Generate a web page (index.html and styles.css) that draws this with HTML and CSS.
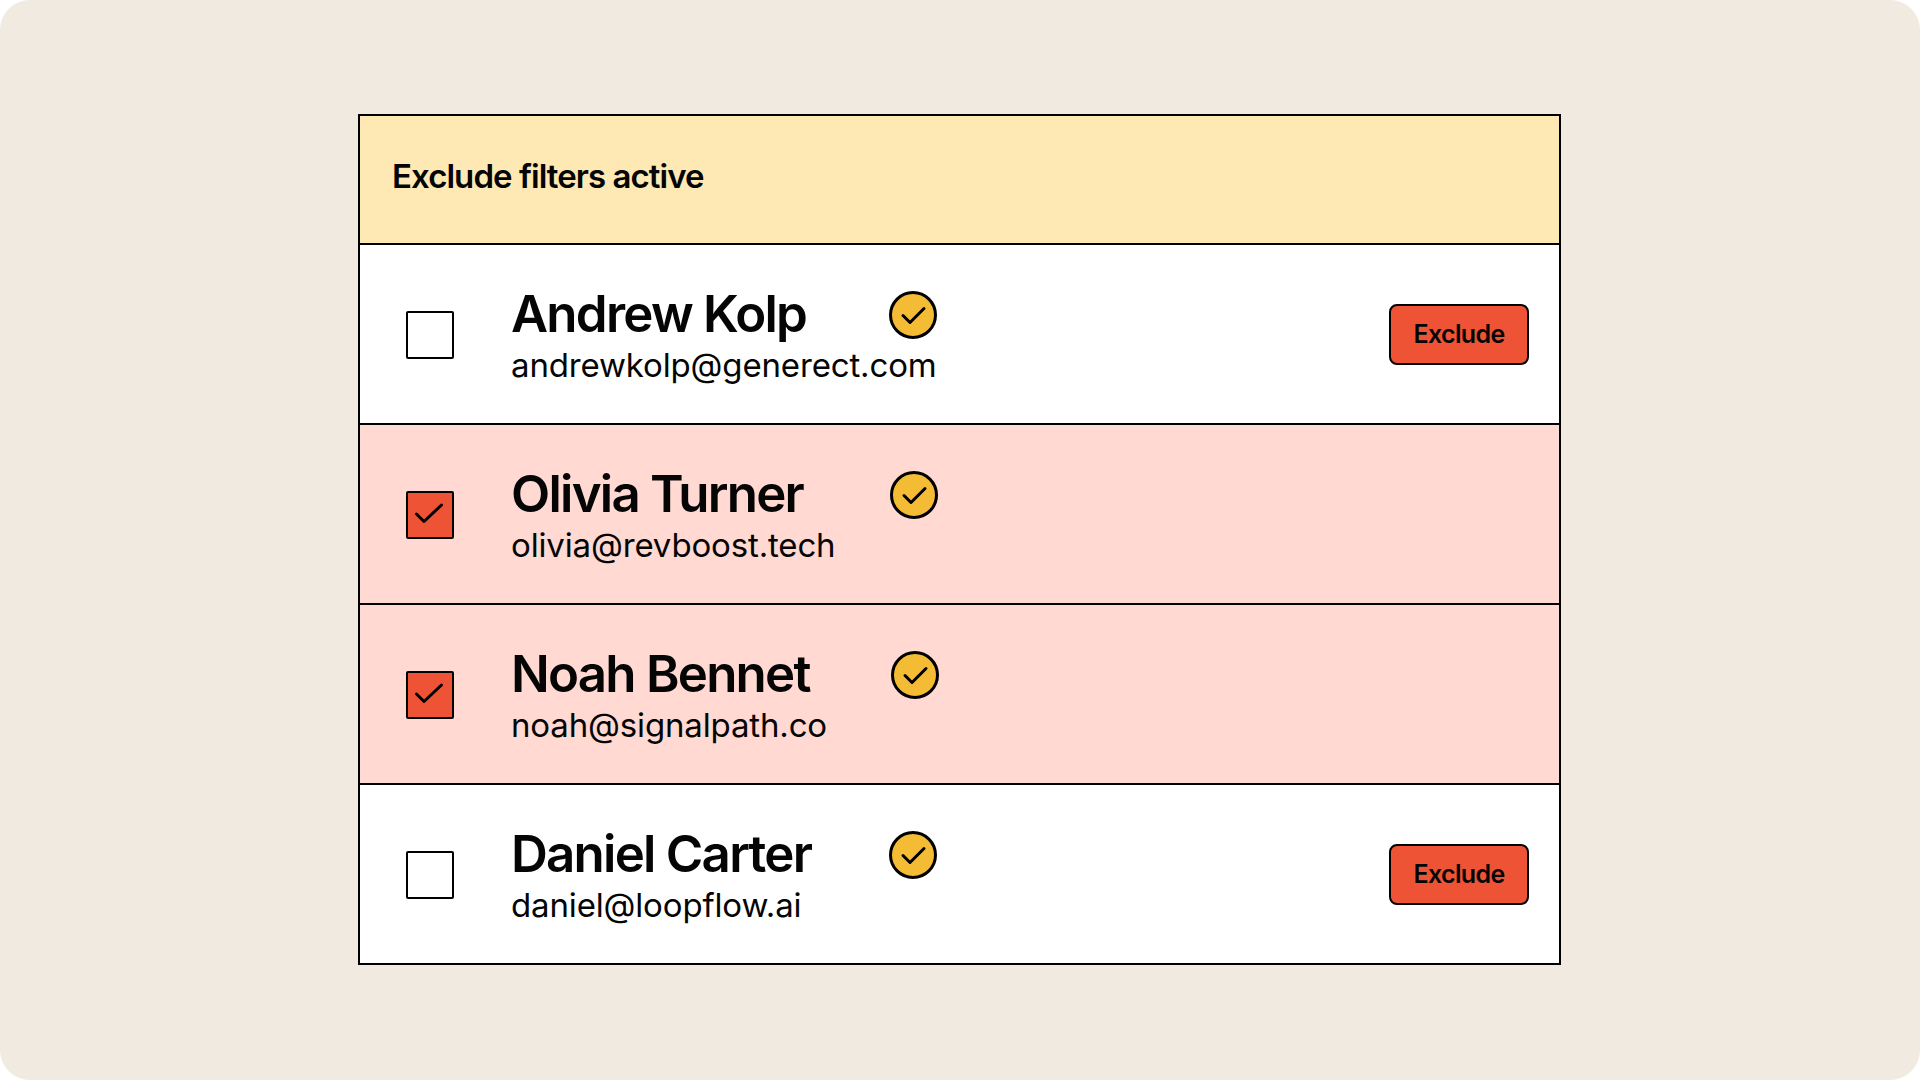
FILE: index.html
```html
<!DOCTYPE html>
<html lang="en">
<head>
  <meta charset="UTF-8">
  <title>Exclude filters</title>
  <link rel="stylesheet" href="styles.css">
</head>
<body>
  <div class="frame">
    <div class="table">
      <div class="banner">Exclude filters active</div>

      <div class="row">
        <span class="checkbox"></span>
        <div class="person">
          <div class="name">Andrew Kolp</div>
          <div class="email">andrewkolp@generect.com</div>
        </div>
        <svg class="badge" viewBox="0 0 48 48"><circle cx="24" cy="24" r="22.5"/><path d="M14 24.5l7 7L35 17.5"/></svg>
        <button class="exclude">Exclude</button>
      </div>

      <div class="row row-excluded">
        <span class="checkbox checked"><svg viewBox="0 0 48 48"><path d="M10.5 23l7.5 7.5L35.5 14"/></svg></span>
        <div class="person">
          <div class="name">Olivia Turner</div>
          <div class="email">olivia@revboost.tech</div>
        </div>
        <svg class="badge badge-2" viewBox="0 0 48 48"><circle cx="24" cy="24" r="22.5"/><path d="M14 24.5l7 7L35 17.5"/></svg>
      </div>

      <div class="row row-excluded">
        <span class="checkbox checked"><svg viewBox="0 0 48 48"><path d="M10.5 23l7.5 7.5L35.5 14"/></svg></span>
        <div class="person">
          <div class="name">Noah Bennet</div>
          <div class="email">noah@signalpath.co</div>
        </div>
        <svg class="badge badge-3" viewBox="0 0 48 48"><circle cx="24" cy="24" r="22.5"/><path d="M14 24.5l7 7L35 17.5"/></svg>
      </div>

      <div class="row">
        <span class="checkbox"></span>
        <div class="person">
          <div class="name">Daniel Carter</div>
          <div class="email">daniel@loopflow.ai</div>
        </div>
        <svg class="badge" viewBox="0 0 48 48"><circle cx="24" cy="24" r="22.5"/><path d="M14 24.5l7 7L35 17.5"/></svg>
        <button class="exclude">Exclude</button>
      </div>
    </div>
  </div>
</body>
</html>
```

FILE: styles.css
```css
* {
  margin: 0;
  padding: 0;
  box-sizing: border-box;
}

body {
  width: 1920px;
  height: 1080px;
  overflow: hidden;
  background: #ffffff;
  font-family: Inter, "Noto Sans", sans-serif;
  color: #050505;
}

.frame {
  height: 100%;
  padding: 0 1px 1px 0;
  display: flex;
  justify-content: center;
  align-items: center;
  background: #f1eae0;
  border-radius: 30px;
}

.table {
  width: 1203px;
  border: 2px solid #000;
  background: #fff;
}

.banner {
  height: 127px;
  padding-left: 32px;
  padding-bottom: 7px;
  display: flex;
  align-items: center;
  background: #fee8b4;
  font-size: 33px;
  font-weight: 600;
  letter-spacing: -0.95px;
}

.row {
  height: 180px;
  padding: 2px 30px 0 46px;
  display: flex;
  align-items: center;
  border-top: 2px solid #000;
}

.row-excluded {
  background: #ffd9d2;
}

.checkbox {
  width: 48px;
  height: 48px;
  flex: none;
  border: 2px solid #000;
  border-radius: 2px;
  background: #fff;
}

.checkbox svg {
  display: block;
  width: 48px;
  height: 48px;
  margin: -2px;
  fill: none;
  stroke: #000;
  stroke-width: 3;
  stroke-linecap: round;
  stroke-linejoin: round;
}

.checked {
  background: #ef5335;
}

.person {
  width: 379px;
  margin-left: 57px;
  margin-right: -1px;
  padding-bottom: 2px;
}

.name {
  font-size: 51px;
  font-weight: 600;
  line-height: 58px;
  letter-spacing: -1.75px;
  padding-top: 1px;
}

.email {
  margin-top: 2px;
  font-size: 33px;
  line-height: 40px;
  letter-spacing: -0.15px;
}

.badge {
  width: 48px;
  height: 48px;
  flex: none;
  align-self: flex-start;
  margin-top: 44px;
  fill: #f4bc35;
  stroke: #000;
  stroke-width: 3;
  stroke-linecap: round;
  stroke-linejoin: round;
}

.badge-2 {
  margin-left: 1px;
}

.badge-3 {
  margin-left: 2px;
}

.exclude {
  width: 140px;
  height: 61px;
  margin-left: auto;
  margin-top: -2px;
  border: 2px solid #000;
  border-radius: 8px;
  background: #ef5335;
  color: #050505;
  font-family: Inter, sans-serif;
  font-size: 25px;
  font-weight: 600;
  letter-spacing: -0.65px;
}
```
